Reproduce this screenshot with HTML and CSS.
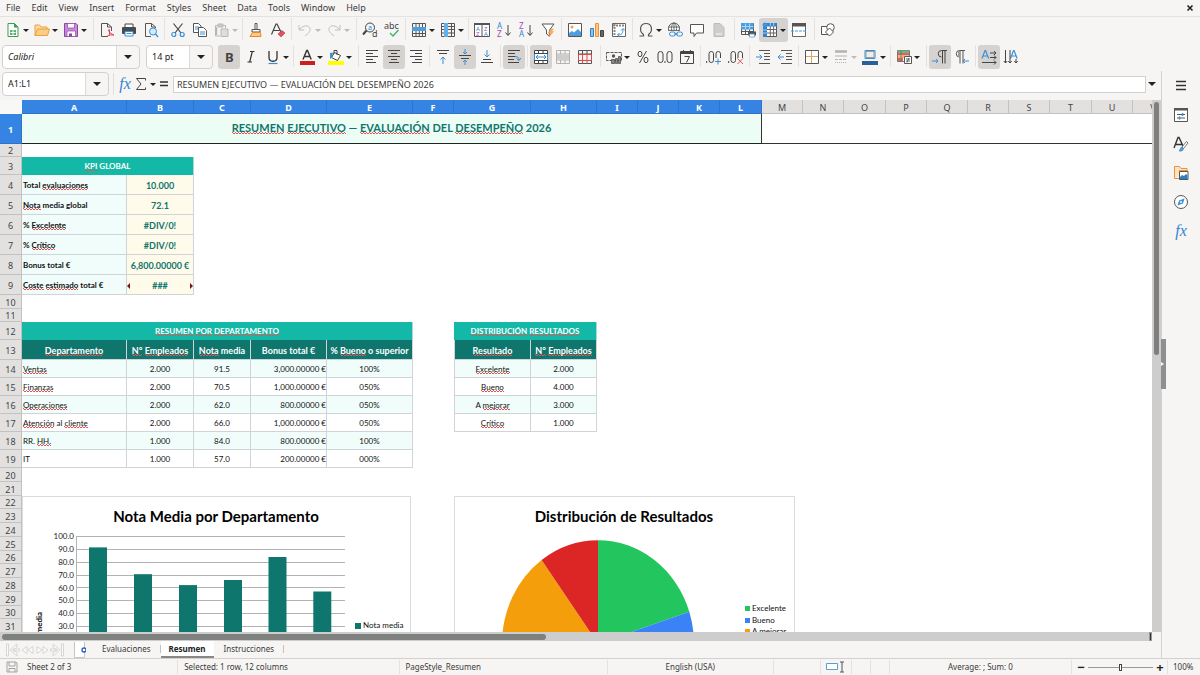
FILE: index.html
```html
<!DOCTYPE html>
<html lang="es">
<head>
<meta charset="utf-8">
<title>Resumen</title>
<link rel="stylesheet" href="styles.css">
</head>
<body>
<div class="app">
<nav class="menubar">
<button>File</button><button>Edit</button><button>View</button><button>Insert</button><button>Format</button><button>Styles</button><button>Sheet</button><button>Data</button><button>Tools</button><button>Window</button><button>Help</button>
<button class="close" aria-label="Close"><svg viewBox="0 0 8 8"><path d="M1.500 1.500l5 5M6.500 1.500l-5 5" stroke="#222" stroke-width="1.600"/></svg></button>
</nav>

<div class="toolbar">
<button class="tb drop" aria-label="New"><svg viewBox="0 0 16 16"><path d="M3 1.500h6.500l3.500 3.500v9.500H3z" fill="#fff" stroke="#3a9d54"/><path d="M9 1v4.500h4z" fill="#3a9d54"/><path d="M5 8h6v5H5z" fill="#59b36f"/><path d="M5.500 10.500h5M8 8v5" stroke="#fff"/></svg></button>
<button class="tb drop" aria-label="Open"><svg viewBox="0 0 16 16"><path d="M1 13.500V3h4.500l1.500 2h6v2.500" fill="#fcdca0" stroke="#e8a33d"/><path d="M1 13.500l2.500-6.500h12l-2 6.500z" fill="#fccb86" stroke="#e8a33d"/></svg></button>
<button class="tb drop" aria-label="Save"><svg viewBox="0 0 16 16"><path d="M1.500 1.500h11.500l1.500 1.500v11.500H1.500z" fill="#c98ad8" stroke="#8f43a8"/><path d="M4.500 1.500h7v4.500h-7zM4 9h8.500v5.500H4z" fill="#fff" stroke="#8f43a8" stroke-width=".7"/><path d="M6 11.500h3v3H6z" fill="#8f43a8"/></svg></button>
<span class="sep wide"></span>
<button class="tb" aria-label="Export as PDF"><svg viewBox="0 0 16 16"><path d="M12.500 9V5l-4-3.500h-6v13H9" fill="none" stroke="#555"/><path d="M8.500 1.500V5h4" fill="none" stroke="#555"/><path d="M9.500 8c1 3 2.500 4 5.500 5M9.500 14c1.500-2 1.500-4 .5-7M8 14.500c2-1.500 4-2 7-1.500" fill="none" stroke="#e03c4b"/></svg></button>
<button class="tb" aria-label="Print"><svg viewBox="0 0 16 16"><path d="M4 5V2h8v3" fill="#fff" stroke="#444"/><rect x="1" y="5" width="14" height="7" rx="1" fill="#4a4a4a"/><path d="M4 9.500h8V14H4z" fill="#fff" stroke="#3a8fd6"/><path d="M5.500 11.500h5" stroke="#3a8fd6"/></svg></button>
<button class="tb" aria-label="Print preview"><svg viewBox="0 0 16 16"><path d="M12.500 6V5l-4-3.500h-6v13H8" fill="none" stroke="#555"/><path d="M8.500 1.500V5h4" fill="none" stroke="#555"/><circle cx="10" cy="9.500" r="3.500" fill="#d6ebfa" stroke="#3a8fd6"/><path d="M12.500 12l2.500 3" stroke="#3a8fd6" stroke-width="1.300"/></svg></button>
<span class="sep"></span>
<button class="tb" aria-label="Cut"><svg viewBox="0 0 16 16" fill="none"><path d="M3.500 1.500l7.500 9.500M12.500 1.500L5 11" stroke="#444" stroke-width="1.200"/><circle cx="3.800" cy="12.500" r="2" stroke="#3a8fd6" stroke-width="1.200"/><circle cx="12.200" cy="12.500" r="2" stroke="#3a8fd6" stroke-width="1.200"/></svg></button>
<button class="tb" aria-label="Copy"><svg viewBox="0 0 16 16" fill="#fff" stroke="#555"><path d="M1.500 1.500h5l2.500 2.500v6.500H1.500z"/><path d="M3 5h4M3 7h4" stroke="#3a8fd6"/><path d="M6.500 5.500h5L14.500 8.500v6H6.500z"/><path d="M8 10h5M8 12h5" stroke="#3a8fd6"/></svg></button>
<button class="tb drop off" aria-label="Paste"><svg viewBox="0 0 16 16" fill="none" stroke="#b9b7b5"><path d="M3.500 3.500h-2v10.500H6M9.500 3.500h2V6" /><path d="M4 2h5v3H4z" fill="#ccc"/><path d="M7 7h7v7.500H7z" fill="#ddd"/><path d="M2.500 5v8" stroke-width="1.500"/></svg></button>
<span class="sep"></span>
<button class="tb" aria-label="Clone formatting"><svg viewBox="0 0 16 16" fill="none" stroke="#555"><path d="M7 1.500h2v6H7zM4 7.500h8v2.500H4z" fill="#fff"/><path d="M4.500 10.500L2 14.500h11l-.5-4z" fill="#fbc98a" stroke="#e08a2c"/></svg></button>
<button class="tb" aria-label="Clear formatting"><svg viewBox="0 0 16 16" fill="none"><path d="M1.500 12.500L6 2h1l4.500 9M3.500 8.500h6" stroke="#444" stroke-width="1.200"/><path d="M8 12l4-3.500 3 2.500-4 4z" fill="#e0525c" stroke="#c43a46" stroke-width=".6"/></svg></button>
<span class="sep"></span>
<button class="tb drop off" aria-label="Undo"><svg viewBox="0 0 16 16" fill="none" stroke="#c2c0be"><path d="M2 3v5h5M2.500 7.500C6 3 12 2.500 13 6.500c.7 3-2 5-5 7.500"/></svg></button>
<button class="tb drop off" aria-label="Redo"><svg viewBox="0 0 16 16" fill="none" stroke="#c2c0be"><path d="M14 3v5H9M13.500 7.500C10 3 4 2.500 3 6.500c-.7 3 2 5 5 7.500"/></svg></button>
<span class="sep wide"></span>
<button class="tb" aria-label="Find and replace"><svg viewBox="0 0 16 16"><circle cx="8" cy="5.500" r="4.500" fill="#eef6fc" stroke="#444"/><path d="M4.500 8.500L1 12.500" stroke="#444" stroke-width="2"/><text x="6" y="8" class="g blue" font-size="7">a</text><text x="10" y="15" class="g" font-size="9">d</text></svg></button>
<button class="tb" aria-label="Spelling"><svg viewBox="0 0 16 16"><text x="0" y="7" class="g" font-size="9">abc</text><path d="M6 11l3 3 5.500-6" fill="none" stroke="#45b36b" stroke-width="1.400"/></svg></button>
<span class="sep"></span>
<button class="tb drop" aria-label="Row"><svg viewBox="0 0 16 16" fill="none"><path d="M1.500 1.500h13v13h-13zM1.500 11.500h13M5 1.500v13M8.300 1.500v13M11.500 1.500v13" stroke="#555"/><path d="M1 5h14v4H1z" fill="#4f9fe0"/></svg></button>
<button class="tb drop" aria-label="Column"><svg viewBox="0 0 16 16" fill="none"><path d="M1.500 1.500h13v13h-13zM1.500 4.500h13M1.500 7.500h13M1.500 11h13M11.500 1.500v13" stroke="#555"/><path d="M4 1h4v14H4z" fill="#63b0ea"/></svg></button>
<span class="sep"></span>
<button class="tb" aria-label="Sort"><svg viewBox="0 0 16 16"><path d="M.5 1.500h15v13H.5zM8 1.500v13" fill="#fff" stroke="#555"/><path d="M0 1h16v2H0z" fill="#555"/><text x="2" y="8.500" class="g blue" font-size="6">A</text><text x="2" y="14" class="g pur" font-size="6">Z</text><text x="10" y="8.500" class="g pur" font-size="6">Z</text><text x="10" y="14" class="g blue" font-size="6">A</text></svg></button>
<button class="tb" aria-label="Sort ascending"><svg viewBox="0 0 16 16"><text x="1" y="7" class="g blue" font-size="8">A</text><text x="1" y="15" class="g pur" font-size="8">Z</text><path d="M12 3v10M9.500 10.500L12 13.500l2.500-3" fill="none" stroke="#444"/></svg></button>
<button class="tb" aria-label="Sort descending"><svg viewBox="0 0 16 16"><text x="1" y="7" class="g pur" font-size="8">Z</text><text x="1" y="15" class="g blue" font-size="8">A</text><path d="M12 3v10M9.500 10.500L12 13.500l2.500-3" fill="none" stroke="#444"/></svg></button>
<button class="tb" aria-label="AutoFilter"><svg viewBox="0 0 16 16"><path d="M2 2h12L9.500 8v6L6.500 12V8z" fill="#fff" stroke="#555"/><path d="M11 7l-3 4h2l-1 4 4.500-5.500H11L13.500 7z" fill="#f7b15c" stroke="#e8943a" stroke-width=".5"/></svg></button>
<span class="sep"></span>
<button class="tb" aria-label="Insert image"><svg viewBox="0 0 16 16"><path d="M1.500 1.500h13v13h-13z" fill="#fff" stroke="#555"/><circle cx="5" cy="5" r="1.500" fill="#f3a24a"/><path d="M2 14v-3l3-2 2 1.500 4-3.500 3 3v4z" fill="#4f9fe0"/></svg></button>
<button class="tb" aria-label="Insert chart"><svg viewBox="0 0 16 16"><path d="M1.500 6.500h3v8h-3z" fill="#8cc4f0" stroke="#2f7fc4"/><path d="M6.500 1.500h3v13h-3z" fill="#fbc98a" stroke="#e8943a"/><path d="M11.500 8.500h3v6h-3z" fill="#666" stroke="#444"/></svg></button>
<button class="tb" aria-label="Insert pivot table"><svg viewBox="0 0 16 16" fill="none"><path d="M1.500 1.500h13v13h-13z" fill="#fff" stroke="#666"/><path d="M2 3.500h12M3.500 2v12" stroke="#888" stroke-width="2" stroke-dasharray="2 1"/><path d="M7 13c4 0 5-2 5-6M10 8.500l2-2 2 2M8.500 11L6.500 13l2 1.500" stroke="#3a8fd6"/></svg></button>
<span class="sep"></span>
<button class="tb drop" aria-label="Special character"><svg viewBox="0 0 16 16"><path d="M1.500 14h4v-1.500C1 9.500 1.500 1.500 8 1.500s7 8 2.500 11V14h4" fill="none" stroke="#555" stroke-width="1.200"/></svg></button>
<button class="tb" aria-label="Hyperlink"><svg viewBox="0 0 16 16" fill="none"><circle cx="7" cy="6.500" r="5.500" stroke="#555"/><ellipse cx="7" cy="6.500" rx="2.500" ry="5.500" stroke="#555" stroke-width=".8"/><path d="M1.500 5h11M1.500 8.500h11M7 1v11" stroke="#555" stroke-width=".8"/><path d="M2 9h14v6H2z" fill="#f6f5f4"/><rect x="2.500" y="10" width="6" height="4" rx="2" stroke="#3a8fd6"/><rect x="9.500" y="10" width="6" height="4" rx="2" stroke="#3a8fd6"/><path d="M7 12h4" stroke="#3a8fd6"/></svg></button>
<button class="tb" aria-label="Comment"><svg viewBox="0 0 16 16"><path d="M1.500 2.500h13v8.500H7.500L5 14.500V11H1.500z" fill="#fff" stroke="#555"/></svg></button>
<button class="tb off" aria-label="Headers and footers"><svg viewBox="0 0 16 16"><path d="M3 1.500h6l4 4v9H3z" fill="#cfcdcb" stroke="#bdbbb9"/><path d="M5 11h6v2H5z" fill="#e5e3e1"/></svg></button>
<span class="sep wide"></span>
<button class="tb" aria-label="Define print area"><svg viewBox="0 0 16 16" fill="none"><path d="M1.500 1.500h12v11h-12zM1.500 9.500h12M5.500 1.500v11M9.500 1.500v11" stroke="#555"/><path d="M1 1h12.500v6.500H1z" fill="#4f9fe0"/><path d="M1.500 4.500h12M5.500 1.500v6M9.500 1.500v6" stroke="#bfe0f8" stroke-width=".8"/><rect x="8" y="9.500" width="8" height="4" fill="#555"/><path d="M9.500 12h5v3h-5z" fill="#fff" stroke="#3a8fd6" stroke-width=".7"/></svg></button>
<button class="tb drop on" aria-label="Freeze rows and columns"><svg viewBox="0 0 16 16" fill="none"><path d="M1.500 1.500h13v13H1.500z" fill="#fff" stroke="#555"/><path d="M5 7.500h10M5 11h10M8.300 4v10.500M11.600 4v10.500" stroke="#666"/><path d="M1 1h14v3.500H5V15H1z" fill="#2f82cf"/><path d="M1 8h4M1 11h4M8.300 1v3M11.600 1v3" stroke="#bfe0f8" stroke-width=".8"/><path d="M3 0v6M0 3h6M1 1l4 4M5 1L1 5" stroke="#4f9fe0" stroke-width=".7"/></svg></button>
<button class="tb" aria-label="Split window"><svg viewBox="0 0 16 16" fill="none"><path d="M1.500 2.500h13v12h-13z" fill="#fff" stroke="#666"/><path d="M1 1h14v3.500H1z" fill="#555"/><path d="M0 9h16" stroke="#3a9be0" stroke-dasharray="3 1"/></svg></button>
<span class="sep wide"></span>
<button class="tb" aria-label="Show draw functions"><svg viewBox="0 0 16 16" fill="#fff" stroke="#555"><path d="M1.500 4.500h8v8h-8z"/><circle cx="10.500" cy="5.500" r="3.800"/><path d="M9.500 6l4 4-4 4-4-4z"/></svg></button>
</div>

<div class="toolbar">
<label class="combo font"><select aria-label="Font name"><option>Calibri</option></select></label>
<label class="combo size"><select aria-label="Font size"><option>14 pt</option></select></label>
<button class="tb on" aria-label="Bold"><svg viewBox="0 0 16 16"><text x="4" y="13" class="g" font-size="13" font-weight="700">B</text></svg></button>
<button class="tb" aria-label="Italic"><svg viewBox="0 0 16 16"><path d="M7 2.500h4.500M4.500 13h4.500M9.300 2.500L6.700 13" fill="none" stroke="#333" stroke-width="1.200"/></svg></button>
<button class="tb drop" aria-label="Underline"><svg viewBox="0 0 16 16" fill="none"><path d="M4 2v6.500c0 5 8 5 8 0V2" stroke="#333" stroke-width="1.300"/><path d="M3.500 14.500h9" stroke="#3a8fd6" stroke-width="1.200"/></svg></button>
<span class="sep"></span>
<button class="tb drop" aria-label="Font color"><svg viewBox="0 0 16 16"><path d="M4 10.500L7.700 1.500h.8l3.700 9M5.200 7.500h5.800" fill="none" stroke="#333" stroke-width="1.400"/><path d="M1 12h15v4H1z" fill="#c9211e"/></svg></button>
<button class="tb drop" aria-label="Highlighting"><svg viewBox="0 0 16 16"><path d="M6.500 3.500l6 3-3 5-6-3z" fill="#fff" stroke="#444"/><path d="M6 5V1.500h3V6" fill="none" stroke="#444"/><path d="M2 10V4l3-.5-1 5z" fill="#3a8fd6"/><path d="M0 12h16v4H0z" fill="#ff0"/></svg></button>
<span class="sep wide"></span>
<button class="tb" aria-label="Align left"><svg viewBox="0 0 16 16"><path d="M2 1.500h12M2 4.500h7M2 7.500h12M2 10.500h7M2 13.500h10" stroke="#444"/></svg></button>
<button class="tb on" aria-label="Center"><svg viewBox="0 0 16 16"><path d="M2 1.500h12M5 4.500h6M2 7.500h12M5 10.500h6M3 13.500h10" stroke="#444"/></svg></button>
<button class="tb" aria-label="Align right"><svg viewBox="0 0 16 16"><path d="M2 1.500h12M7 4.500h7M2 7.500h12M7 10.500h7M4 13.500h10" stroke="#444"/></svg></button>
<span class="sep"></span>
<button class="tb" aria-label="Align top"><svg viewBox="0 0 16 16" fill="none"><path d="M2 1.500h12M4 4.500h8" stroke="#444"/><path d="M8 15V8M5.500 10.500L8 8l2.500 2.500" stroke="#3a8fd6"/></svg></button>
<button class="tb on" aria-label="Center vertically"><svg viewBox="0 0 16 16" fill="none"><path d="M2 6.500h12M4 9.500h8" stroke="#444"/><path d="M8 0v5M6 3l2 2 2-2M8 16v-5M6 13l2-2 2 2" stroke="#3a8fd6"/></svg></button>
<button class="tb" aria-label="Align bottom"><svg viewBox="0 0 16 16" fill="none"><path d="M4 10.500h8M2 13.500h12" stroke="#444"/><path d="M8 1v7M5.500 5.500L8 8l2.500-2.500" stroke="#3a8fd6"/></svg></button>
<span class="sep"></span>
<button class="tb on" aria-label="Wrap text"><svg viewBox="0 0 16 16" fill="none"><path d="M2 1.500h12M2 4.500h7M2 7.500h7M2 10.500h6M2 13.500h11" stroke="#444"/><path d="M9 7.500c3 0 4 1 4 4M10.500 9.500l2.500 2 2-2.500" stroke="#3a8fd6"/></svg></button>
<span class="sep"></span>
<button class="tb on" aria-label="Merge and center"><svg viewBox="0 0 16 16" fill="none"><path d="M1.500 1.500h13v13h-13zM1.500 4.500h13M1.500 11.500h13M5.500 1.500v3M10 1.500v3M5.500 11.500v3M10 11.500v3" fill="#fff" stroke="#444"/><path d="M3 8h10M5 6L3 8l2 2M11 6l2 2-2 2M1.500 5v6M14.500 5v6" stroke="#3a8fd6"/></svg></button>
<button class="tb off" aria-label="Merge cells"><svg viewBox="0 0 16 16" fill="none"><path d="M1.500 1.500h13v13h-13zM1.500 5h13M1.500 11h13M5.500 1.500v3.500M10 1.500v3.500M5.500 11v3.500M10 11v3.500" stroke="#b5b3b1"/><path d="M2 5.500h12v5H2z" fill="#cfcdcb"/></svg></button>
<button class="tb" aria-label="Unmerge cells"><svg viewBox="0 0 16 16" fill="none"><path d="M1.500 1.500h13v13h-13zM1.500 5h13M5.500 1.500v3.500M10 1.500v3.500" stroke="#555"/><path d="M1.500 5.500h13v6h-13zM5.500 5.500v9M10 5.500v9" stroke="#dc4b4b"/></svg></button>
<span class="sep wide"></span>
<button class="tb drop" aria-label="Currency"><svg viewBox="0 0 16 16" fill="none"><path d="M.5 3.500h15v8H.5z" stroke="#555" stroke-dasharray="3 1"/><circle cx="7.500" cy="7" r="1.700" fill="#555"/><path d="M5.500 10.500h3v4h-3zM9.500 9.500h2v5h-2zM12.500 7.500h2v7h-2z" fill="#888" stroke="#444" stroke-width=".7"/></svg></button>
<button class="tb" aria-label="Percent"><svg viewBox="0 0 16 16" fill="none" stroke="#444"><ellipse cx="5" cy="5" rx="2" ry="2.700"/><ellipse cx="11" cy="11" rx="2" ry="2.700"/><path d="M11.500 2L4.500 14"/></svg></button>
<button class="tb" aria-label="Number"><svg viewBox="0 0 16 16" fill="none" stroke="#444"><rect x="1" y="2.500" width="5" height="11" rx="2.500"/><rect x="10" y="2.500" width="5" height="11" rx="2.500"/><path d="M8 12v2"/></svg></button>
<button class="tb" aria-label="Date"><svg viewBox="0 0 16 16" fill="none" stroke="#444"><path d="M1.500 2.500h13v12h-13z"/><path d="M1.500 4h13" stroke-width="2"/><path d="M4.500 1v2M11.500 1v2M5.500 7.500h5l-3 6"/></svg></button>
<span class="sep"></span>
<button class="tb" aria-label="Add decimal place"><svg viewBox="0 0 16 16" fill="none" stroke="#444"><path d="M.7 12v2"/><rect x="3" y="2.500" width="4.500" height="11" rx="2.200"/><rect x="10" y="2.500" width="4.500" height="11" rx="2.200"/><path d="M8.500 9h7v7h-7z" fill="#f6f5f4" stroke="none"/><path d="M12 9.500v6M9 12.500h6" stroke="#3a8fd6"/></svg></button>
<button class="tb" aria-label="Delete decimal place"><svg viewBox="0 0 16 16" fill="none" stroke="#444"><path d="M.7 12v2"/><rect x="3" y="2.500" width="4.500" height="11" rx="2.200"/><rect x="10" y="2.500" width="4.500" height="11" rx="2.200"/><path d="M8.500 9h7v7h-7z" fill="#f6f5f4" stroke="none"/><path d="M9.500 9.500l5.500 5.500M15 9.500L9.500 15" stroke="#e05555"/></svg></button>
<span class="sep"></span>
<button class="tb" aria-label="Increase indent"><svg viewBox="0 0 16 16" fill="none"><path d="M4 1.500h11M9 4.500h6M9 7.500h6M9 10.500h6M4 14.500h11" stroke="#555"/><path d="M1 8h6M4.500 5.500L7 8l-2.500 2.500" stroke="#3a8fd6"/></svg></button>
<button class="tb" aria-label="Decrease indent"><svg viewBox="0 0 16 16" fill="none"><path d="M4 1.500h11M9 4.500h6M9 7.500h6M9 10.500h6M4 14.500h11" stroke="#555"/><path d="M1 8h6M3.500 5.500L1 8l2.500 2.500" stroke="#3a8fd6"/></svg></button>
<span class="sep"></span>
<button class="tb drop" aria-label="Borders"><svg viewBox="0 0 16 16" fill="none"><path d="M1.500 1.500h13v13h-13z" fill="#fff" stroke="#555"/><path d="M7.500 2v12M2 7.500h12" stroke="#e8a35a"/></svg></button>
<button class="tb drop off" aria-label="Border style"><svg viewBox="0 0 16 16" fill="none" stroke="#b5b3b1"><path d="M2 2.500h12" stroke-width="2.500"/><path d="M2 7h12"/><path d="M2 10.500h12" stroke-dasharray="3 1"/><path d="M2 13.500h12" stroke-dasharray="1 1"/></svg></button>
<button class="tb drop" aria-label="Border color"><svg viewBox="0 0 16 16"><path d="M3 1.500h10v8H3z" fill="#fff" stroke="#3a8fd6"/><path d="M4 2.500h8v6H4z" fill="#eee" stroke="#777" stroke-width=".7"/><path d="M0 12h16v4H0z" fill="#2a6099"/></svg></button>
<span class="sep"></span>
<button class="tb drop" aria-label="Conditional formatting"><svg viewBox="0 0 16 16" fill="none"><path d="M1.500 1.500h12v11h-12z" fill="#fff" stroke="#777"/><path d="M2 4h11v2.500H2z" fill="#e0605c"/><path d="M2 1.500h11V4H2z" fill="#66bb7a"/><path d="M2 7h6v2H2z" fill="#f7b15c"/><path d="M2 9h5v3H2z" fill="#e0605c"/><path d="M5 1.500v11" stroke="#777"/><path d="M8.500 7.500h7v7h-7z" fill="#fff" stroke="#555"/><path d="M10 10h4M10 12h4M13 9l-2 4.500" stroke="#444" stroke-width=".8"/></svg></button>
<span class="sep wide"></span>
<button class="tb on" aria-label="Left-to-right"><svg viewBox="0 0 16 16" fill="none" stroke="#444"><path d="M15 1.500H9.500a3 3 0 000 6.500M10.500 1.500V14.500M13 1.500v13"/><path d="M0 12h6M4 10l2 2-2 2" stroke="#3a8fd6"/></svg></button>
<button class="tb" aria-label="Right-to-left"><svg viewBox="0 0 16 16" fill="none" stroke="#555"><path d="M11 1.500H5.500a3 3 0 000 6.500M6 1.500V14.500M9 1.500v13"/><path d="M5 2v6" stroke-width="2" stroke="#999"/><path d="M15 12H9M11 10l-2 2 2 2" stroke="#3a8fd6"/></svg></button>
<span class="sep"></span>
<button class="tb on" aria-label="Text direction from left to right"><svg viewBox="0 0 16 16" fill="none"><path d="M1 9.500L4 1.500h.6l3 8M2 7h4.500" stroke="#3a8fd6" stroke-width="1.200"/><path d="M9 4h6M9 8.500h6M1 13.500h14M13 2l2 2-2 2M13 6.500l2 2-2 2M13 11.500l2 2-2 2" stroke="#444"/></svg></button>
<button class="tb" aria-label="Text direction from top to bottom"><svg viewBox="0 0 16 16" fill="none"><path d="M7.500 9.500l3-8h.6l3 8M9 7h4.500" stroke="#3a8fd6" stroke-width="1.200"/><path d="M2.500 1v13M7 1v13M13 10v4M.8 12l1.700 2 1.700-2M5.300 12L7 14l1.700-2M11.300 12l1.700 2 1.700-2" stroke="#444"/></svg></button>
</div>

<div class="main">
<main class="work">
<div class="formula">
<label class="combo name"><select aria-label="Name box"><option>A1:L1</option></select></label>
<span class="vline"></span>
<button class="fbtn" aria-label="Function wizard"><span class="fx">fx</span></button>
<button class="fbtn sum drop" aria-label="Select function"><svg viewBox="0 0 16 16"><path d="M12.500 4.500v-2h-9L8 8l-4.500 5.500h9v-2" fill="none" stroke="#444"/></svg></button>
<button class="fbtn" aria-label="Formula"><svg viewBox="0 0 16 16"><path d="M4 6h8M4 9.500h8" stroke="#333" stroke-width="1.500"/></svg></button>
<input type="text" aria-label="Input line" value="RESUMEN EJECUTIVO — EVALUACIÓN DEL DESEMPEÑO 2026">
<button class="expand" aria-label="Expand formula bar"></button>
</div>

<div class="viewport">
<div class="sheet">
<table>
<colgroup><col class="w22"><col class="w105"><col class="w67"><col class="w57"><col class="w76"><col class="w86"><col class="w41"><col class="w77"><col class="w66"><col class="w41"><col class="w41"><col class="w41"><col class="w42"><col class="w41"><col class="w41"><col class="w42"><col class="w41"><col class="w41"><col class="w41"><col class="w41"><col class="w42"><col class="w41"><col></colgroup>
<thead><tr class="h14"><td class="corner"></td><th class="sel">A</th><th class="sel">B</th><th class="sel">C</th><th class="sel">D</th><th class="sel">E</th><th class="sel">F</th><th class="sel">G</th><th class="sel">H</th><th class="sel">I</th><th class="sel">J</th><th class="sel">K</th><th class="sel">L</th><th>M</th><th>N</th><th>O</th><th>P</th><th>Q</th><th>R</th><th>S</th><th>T</th><th>U</th><th>V</th></tr></thead>
<tbody>
<tr class="h30"><th class="sel">1</th><td colspan="12" class="title"><span class="sp">RESUMEN</span> <span class="sp">EJECUTIVO</span> — <span class="sp">EVALUACIÓN</span> DEL <span class="sp">DESEMPEÑO</span> 2026</td><td colspan="10" class="frozen"></td></tr>
<tr class="h13"><th>2</th></tr>
<tr class="h18"><th>3</th><td colspan="2" class="band"><span class="sp">KPI</span> GLOBAL</td></tr>
<tr class="h20"><th>4</th><td class="lab">Total <span class="sp">evaluaciones</span></td><td class="val">10.000</td></tr>
<tr class="h20"><th>5</th><td class="lab"><span class="sp">Nota</span> media global</td><td class="val">72.1</td></tr>
<tr class="h20"><th>6</th><td class="lab">% <span class="sp">Excelente</span></td><td class="val">#DIV/0!</td></tr>
<tr class="h20"><th>7</th><td class="lab">% <span class="sp">Crítico</span></td><td class="val">#DIV/0!</td></tr>
<tr class="h20"><th>8</th><td class="lab">Bonus total €</td><td class="val">6,800.00000 €</td></tr>
<tr class="h20"><th>9</th><td class="lab"><span class="sp">Coste</span> <span class="sp">estimado</span> total €</td><td class="val"><div class="clip"><span class="tri left"></span>###<span class="tri right"></span></div></td></tr>
<tr class="h14"><th>10</th></tr>
<tr class="h13"><th>11</th></tr>
<tr class="h18"><th>12</th><td colspan="5" class="band"><span class="sp">RESUMEN</span> <span class="sp">POR</span> <span class="sp">DEPARTAMENTO</span></td><td></td><td colspan="2" class="band"><span class="sp">DISTRIBUCIÓN</span> <span class="sp">RESULTADOS</span></td></tr>
<tr class="h20"><th>13</th><td class="head"><span class="sp">Departamento</span></td><td class="head"><span class="sp">N°</span> <span class="sp">Empleados</span></td><td class="head"><span class="sp">Nota</span> media</td><td class="head">Bonus total €</td><td class="head">% <span class="sp">Bueno</span> o superior</td><td></td><td class="head first"><span class="sp">Resultado</span></td><td class="head"><span class="sp">N°</span> <span class="sp">Empleados</span></td></tr>
<tr class="h18 tint"><th>14</th><td class="c l"><span class="sp">Ventas</span></td><td class="c">2.000</td><td class="c">91.5</td><td class="c r">3,000.00000 €</td><td class="c">100%</td><td></td><td class="c first"><span class="sp">Excelente</span></td><td class="c">2.000</td></tr>
<tr class="h18"><th>15</th><td class="c l"><span class="sp">Finanzas</span></td><td class="c">2.000</td><td class="c">70.5</td><td class="c r">1,000.00000 €</td><td class="c">050%</td><td></td><td class="c first"><span class="sp">Bueno</span></td><td class="c">4.000</td></tr>
<tr class="h18 tint"><th>16</th><td class="c l"><span class="sp">Operaciones</span></td><td class="c">2.000</td><td class="c">62.0</td><td class="c r">800.00000 €</td><td class="c">050%</td><td></td><td class="c first">A <span class="sp">mejorar</span></td><td class="c">3.000</td></tr>
<tr class="h18"><th>17</th><td class="c l"><span class="sp">Atención</span> al <span class="sp">cliente</span></td><td class="c">2.000</td><td class="c">66.0</td><td class="c r">1,000.00000 €</td><td class="c">050%</td><td></td><td class="c first"><span class="sp">Crítico</span></td><td class="c">1.000</td></tr>
<tr class="h18 tint"><th>18</th><td class="c l">RR. <span class="sp">HH.</span></td><td class="c">1.000</td><td class="c">84.0</td><td class="c r">800.00000 €</td><td class="c">100%</td></tr>
<tr class="h18"><th>19</th><td class="c l">IT</td><td class="c">1.000</td><td class="c">57.0</td><td class="c r">200.00000 €</td><td class="c">000%</td></tr>
<tr class="h14"><th>20</th></tr>
<tr class="h14"><th>21</th></tr>
<tr class="h13"><th>22</th></tr>
<tr class="h14"><th>23</th></tr>
<tr class="h14"><th>24</th></tr>
<tr class="h14"><th>25</th></tr>
<tr class="h13"><th>26</th></tr>
<tr class="h14"><th>27</th></tr>
<tr class="h14"><th>28</th></tr>
<tr class="h14"><th>29</th></tr>
<tr class="h13"><th>30</th></tr>
<tr class="h14"><th>31</th></tr>
<tr class="h14"><th>32</th></tr>
</tbody>
</table>

<svg class="chart bars" viewBox="0 0 389 240" width="389" height="240">
<rect x=".5" y=".5" width="388" height="260" fill="#fff" stroke="#dcdcdc"/>
<text x="194" y="26" class="ctitle">Nota Media por Departamento</text>
<path d="M54 40.500h269M54 53.500h269M54 66.500h269M54 79.500h269M54 91.500h269M54 104.500h269M54 117.500h269M54 130.500h269M54.500 40v129" fill="none" stroke="#b3b3b3"/>
<g fill="#0f766e"><rect x="67" y="51.400" width="18" height="117"/><rect x="112" y="78.200" width="18" height="90"/><rect x="157" y="89.100" width="18" height="80"/><rect x="202" y="84" width="18" height="85"/><rect x="246.500" y="61" width="18" height="107"/><rect x="291.300" y="95.500" width="18" height="73"/></g>
<g class="tick"><text x="52" y="43">100.0</text><text x="52" y="56">90.0</text><text x="52" y="69">80.0</text><text x="52" y="82">70.0</text><text x="52" y="95">60.0</text><text x="52" y="107">50.0</text><text x="52" y="120">40.0</text><text x="52" y="133">30.0</text></g>
<text class="axis" transform="translate(20 157) rotate(-90)">Nota media</text>
<rect x="333" y="127" width="6" height="6" fill="#0f766e"/><text x="341" y="132" class="leg">Nota media</text>
</svg>

<svg class="chart pie" viewBox="0 0 341 240" width="341" height="240">
<rect x=".5" y=".5" width="340" height="260" fill="#fff" stroke="#dcdcdc"/>
<text x="170" y="26" class="ctitle">Distribución de Resultados</text>
<path d="M144 147.700V44.300A96 103.400 0 01235.300 115.700z" fill="#22c55e"/>
<path d="M144 147.700L235.300 115.700A96 103.400 0 0187.600 231.300z" fill="#3b82f6"/>
<path d="M144 147.700L87.600 231.300A96 103.400 0 0187.600 64z" fill="#f59e0b"/>
<path d="M144 147.700L87.600 64A96 103.400 0 01144 44.300z" fill="#dc2626"/>
<rect x="291" y="110" width="5" height="5" fill="#22c55e"/><text x="298" y="115" class="leg">Excelente</text>
<rect x="291" y="122" width="5" height="5" fill="#3b82f6"/><text x="298" y="127" class="leg">Bueno</text>
<rect x="291" y="133" width="5" height="5" fill="#f59e0b"/><text x="298" y="138" class="leg">A mejorar</text>
</svg>
</div>
<div class="vscroll"><div class="thumb"></div></div>
<div class="hscroll"><div class="thumb"></div><div class="splitter"></div></div>
</div>

<div class="tabs">
<div class="tabnav">
<button aria-label="First sheet"><svg viewBox="0 0 15 16"><path d="M1.500 2v12h2V2zM12 2L5 8l7 6v-3L8.500 8 12 5zM8 7h7v2H8z"/></svg></button>
<button aria-label="Previous sheet"><svg viewBox="0 0 15 16"><path d="M7 4.500L2 8l5 3.500zM13 4.500L8 8l5 3.500z"/></svg></button>
<button aria-label="Next sheet"><svg viewBox="0 0 15 16"><path d="M2 4.500L7 8l-5 3.500zM8 4.500L13 8l-5 3.500z"/></svg></button>
<button aria-label="Last sheet"><svg viewBox="0 0 15 16"><path d="M11.500 2v12h2V2zM3 2l7 6-7 6v-3L6.500 8 3 5zM7 7H0v2h7z"/></svg></button>
</div>
<button class="add" aria-label="Add sheet"><svg viewBox="0 0 12 16"><path d="M.5 0v15.500h10V0" fill="#fff" stroke="#c8c6c4"/><circle cx="10" cy="8" r="2" fill="#fff" stroke="#2a5fb0" stroke-width="1.300"/></svg></button>
<button class="tab">Evaluaciones</button><button class="tab active">Resumen</button><button class="tab">Instrucciones</button>
</div>
</main>

<aside class="sidebar">
<button aria-label="Sidebar settings"><svg viewBox="0 0 16 16"><path d="M3 3.500h10M3 7.500h10M3 11.500h10" stroke="#333" stroke-width="1.400"/></svg></button>
<button aria-label="Properties"><svg viewBox="0 0 16 16" fill="none"><path d="M1.500 1.500h13v13h-13z" fill="#fff" stroke="#555"/><path d="M1 1h14v2.500H1z" fill="#555"/><path d="M4 7.500h8M4 11h8" stroke="#555"/><path d="M9.500 6v3M6.500 9.500v3" stroke="#3a8fd6" stroke-width="1.500"/></svg></button>
<button aria-label="Styles"><svg viewBox="0 0 16 16" fill="none"><path d="M1 12L5 1.500h1L10 10M2.500 8.500H9" stroke="#333" stroke-width="1.400"/><path d="M9 11l4.500-5.500 1.500 1.500-4.500 5.500z" fill="#fff" stroke="#555" stroke-width=".8"/><path d="M6 15c1.500-1 1-3.500 3-4l1.500 1.500c0 2-2 3-4.500 2.500z" fill="#4f9fe0" stroke="#2f7fc4" stroke-width=".6"/></svg></button>
<button aria-label="Gallery"><svg viewBox="0 0 16 16"><path d="M1.500 13.500v-12h5l1.500 2h6v3" fill="#fde3bf" stroke="#e8943a"/><path d="M1.500 13.500h5v-8h8" fill="none" stroke="#e8943a"/><path d="M6.500 6.500h8.500v8H6.500z" fill="#fff" stroke="#555"/><path d="M7 14v-2l2-2 2 1 2-2 1.500 1.500V14z" fill="#2f7fc4"/></svg></button>
<button aria-label="Navigator"><svg viewBox="0 0 16 16"><circle cx="8" cy="8" r="6.500" fill="#fff" stroke="#555"/><path d="M11.500 4.500L10 9.500l-5.500 2L6 6.500z" fill="#3a8fd6"/><circle cx="8" cy="8" r="1" fill="#fff"/></svg></button>
<button aria-label="Functions"><span class="fx">fx</span></button>
<button class="grip" aria-label="Hide sidebar"><span class="tri right"></span></button>
</aside>
</div>

<footer class="status">
<div class="s1"><svg viewBox="0 0 12 12"><path d="M1 1h9l1 1v9H1zM3 1v4h6V1M3 11V7.500h6V11" fill="none" stroke="#a5a3a1"/></svg><span>Sheet 2 of 3</span></div>
<div class="s2">Selected: 1 row, 12 columns</div>
<div class="s3">PageStyle_Resumen</div>
<div class="s4">English (USA)</div>
<div class="s5"></div>
<div class="s6"><svg viewBox="0 0 24 14"><path d="M1.500 3.500h11v6h-11z" fill="#fff" stroke="#5aa0cf"/><path d="M15 2h4M15 12h4M17 2v10" stroke="#555"/></svg></div>
<div class="s7"></div>
<div class="s7"></div>
<div class="s8">Average: ; Sum: 0</div>
<div class="s9"><button aria-label="Zoom out">−</button><input type="range" aria-label="Zoom" min="0" max="100" value="50"><button aria-label="Zoom in">+</button></div>
<div class="s10">100%</div>
</footer>
</div>
</body>
</html>
```
FILE: styles.css
```css
* { box-sizing: border-box; }
body {
  margin: 0;
  background: #f6f5f4;
  color: #3a3a3a;
  font: 9px/12px "Noto Sans", sans-serif;
}
button, input, select {
  margin: 0;
  padding: 0;
  border: 0;
  background: none;
  color: inherit;
  font: inherit;
}
.app { display: flex; flex-direction: column; height: 100vh; overflow: hidden; }

/* Menu bar */
.menubar {
  display: flex;
  align-items: center;
  gap: 11px;
  height: 17px;
  padding: 0 6px;
  border-bottom: 1px solid #e4e2e0;
}
.menubar .close { margin-left: auto; }
.close svg { display: block; width: 8px; height: 8px; }

/* Toolbars */
.toolbar { display: flex; align-items: flex-start; height: 27px; padding: 1px 0 0 2px; }
.tb {
  position: relative;
  flex: none;
  width: 22px;
  height: 24px;
  padding: 0 3px;
  border-radius: 3px;
}
.tb svg { display: block; width: 16px; height: 16px; overflow: visible; }
.tb.drop { width: 29px; }
.tb.on { background: #d5d2cf; }
.drop::after, .expand::after, .combo::after {
  content: "";
  position: absolute;
  top: 11px;
  right: 2px;
  border: 3px solid transparent;
  border-top: 3px solid #222;
  border-bottom: 0;
}
.drop.off::after { border-top-color: #bbb; }
.sep { flex: none; width: 5px; height: 22px; border-left: 1px solid #e4e2e0; margin-left: 2px; margin-right: -2px; }
.sep.wide { width: 7px; margin-left: 4px; margin-right: -4px; }
.g { font-family: "Noto Sans", sans-serif; fill: #444; }
.g.blue { fill: #2f86d0; }
.g.pur { fill: #a347ba; }

.combo {
  position: relative;
  flex: none;
  height: 24px;
  border: 1px solid #d3d0cd;
  border-radius: 4px;
  background: linear-gradient(#f6f5f4, #f6f5f4) right / 22px 100% no-repeat #fff;
  overflow: hidden;
}
.combo select {
  appearance: none;
  display: block;
  width: 100%;
  height: 100%;
  padding-left: 5px;
  color: #222;
}
.combo::before {
  content: "";
  position: absolute;
  top: 0;
  bottom: 0;
  right: 22px;
  border-left: 1px solid #dcd9d6;
}
.combo::after { top: 9px; right: 7px; border-width: 4px 4px 0; }
.font { width: 138px; margin-right: 6px; font-style: italic; }
.size { width: 67px; margin-right: 5px; }

/* Work area */
.main { display: flex; flex: 1; min-height: 0; }
.work { display: flex; flex-direction: column; flex: 1; min-width: 0; }
.formula { display: flex; align-items: center; flex: none; height: 29px; padding: 0 0 3px 2px; }
.name { width: 107px; }
.vline { width: 1px; height: 22px; margin: 0 3px 0 4px; background: #e0dedc; }
.fbtn { position: relative; width: 16px; height: 20px; }
.fbtn svg { display: block; width: 16px; height: 16px; }
.fbtn.drop { width: 23px; }
.fbtn.drop::after { top: 9px; right: 0; }
.fx { color: #2f86d0; font: italic 16px/16px "Liberation Serif", serif; }
.formula input {
  flex: 1;
  min-width: 0;
  height: 17px;
  margin-left: 1px;
  padding: 0 3px;
  border: 1px solid #d3d0cd;
  background: #fff;
}
.expand { position: relative; width: 15px; height: 24px; }
.expand::after { top: 10px; right: 5px; border-width: 4px 4px 0; }

.viewport {
  display: grid;
  grid-template: minmax(0, 1fr) 9px / minmax(0, 1fr) 9px;
  flex: 1;
  min-height: 0;
}
.sheet { position: relative; overflow: hidden; background: #fff; }
.vscroll { padding: 2px 2px 0; background: #cdcdcd; }
.vscroll .thumb { width: 5px; height: 253px; border-radius: 3px; background: #7f7f7f; }
.hscroll { display: flex; align-items: center; justify-content: space-between; padding-left: 2px; background: #cdcdcd; }
.hscroll .thumb { width: 544px; height: 6px; border-radius: 3px; background: #7f817f; }
.splitter { width: 3px; height: 9px; border: 1px solid #999; background: #333; }

/* Spreadsheet grid */
table {
  table-layout: fixed;
  width: calc(100% + 22px);
  border-collapse: separate;
  border-spacing: 0;
  line-height: 11px;
}
th, td { padding: 1px 0 0; text-align: center; white-space: nowrap; overflow: hidden; }
.w22 { width: 22px; } .w41 { width: 41px; } .w42 { width: 42px; }
.w57 { width: 57px; } .w66 { width: 66px; } .w67 { width: 67px; }
.w76 { width: 76px; } .w77 { width: 77px; } .w86 { width: 86px; } .w105 { width: 105px; }
.h13 { height: 13px; } .h14 { height: 14px; } .h18 { height: 18px; }
.h20 { height: 20px; } .h30 { height: 30px; }
th {
  border: solid #c4c2c0;
  border-width: 0 1px 1px 0;
  background: #e2e1e0;
  color: #444;
  font-weight: 400;
}
th.sel { border-color: #2f74c8; background: #3584e4; color: #fff; font-weight: 700; }
.corner { background: #f8f8f7; }
td { font-family: Lato, sans-serif; color: #111; font-size: 8px; }
.title {
  padding: 0 0 1px;
  border-right: 1px solid #333;
  border-bottom: 1px solid #222;
  background: #ecfdf5;
  color: #0f766e;
  font-size: 11px;
  font-weight: 700;
  line-height: 16px;
}
.frozen { border-bottom: 1px solid #333; }
.band { border-right: 1px solid #a9d8d2; background: #14b8a6; color: #fff; font-weight: 700; }
.lab, .val, .head, .c { padding-top: 2px; border: solid #d0d4d8; border-width: 0 1px 1px 0; }
.lab { background: #f0fdfa; font-weight: 700; text-align: left; }
.lab, .l { padding-left: 1px; }
.val { background: #fffbeb; color: #0f766e; font-size: 9px; font-weight: 700; }
.clip { display: flex; align-items: center; justify-content: space-between; }
.tri { border: 3px solid transparent; }
.tri.left { border-right-color: #7a1515; border-left: 0; }
.tri.right { border-left-color: #7a1515; border-right: 0; }
.head { background: #0f766e; color: #fff; font-size: 9px; font-weight: 700; }
.tint .c { background: #f0fdfa; }
.l { text-align: left; }
.r { text-align: right; }
.first { border-left-width: 1px; }

/* Spelling marks: two dotted rows that read as a fine zigzag */
.sp {
  background:
    linear-gradient(90deg, #e25555 1px, transparent 1px) 0 calc(100% - 1px) / 3px 1px repeat-x,
    linear-gradient(90deg, transparent 1px, #e25555 1px) 0 100% / 3px 1px repeat-x;
}

/* Floating charts */
.chart { position: absolute; top: 396px; font-family: Lato, sans-serif; }
.bars { left: 22px; }
.pie { left: 454px; }
.ctitle { font-size: 15px; font-weight: 700; text-anchor: middle; fill: #000; }
.tick { font-size: 8px; text-anchor: end; fill: #222; }
.axis { font-size: 8px; font-weight: 700; fill: #000; }
.leg { font-size: 8px; fill: #111; }

/* Sheet tabs */
.tabs { display: flex; flex: none; height: 17px; font-size: 8px; }
.tabnav { display: flex; padding: 0 5px; }
.tabnav svg { display: block; width: 15px; height: 16px; fill: #fafafa; stroke: #cfcdcb; stroke-width: .8; }
.add { width: 12px; margin: 0 6px 0 4px; }
.add svg { display: block; width: 12px; height: 16px; }
.tab { position: relative; padding: 0 10px 1px; }
.tab::after { content: ""; position: absolute; top: 4px; bottom: 5px; right: 0; border-right: 1px solid #c4c2c0; }
.tab.active { padding: 0 8px; border-bottom: 2px solid #8a8886; background: #fff; color: #222; font-weight: 700; }
.tab.active::after { display: none; }

/* Sidebar */
.sidebar {
  position: relative;
  display: flex;
  flex-direction: column;
  flex: none;
  width: 39px;
  border-left: 1px solid #d3d0cd;
}
.sidebar button { height: 29px; padding: 0 11px; }
.sidebar svg { display: block; width: 16px; height: 16px; }
.sidebar .grip { position: absolute; top: 268px; left: -1px; width: 5px; height: 50px; padding: 0; background: #8f8f8f; }
.grip .tri { display: block; border-width: 2px 0 2px 3px; border-left-color: #fff; }

/* Status bar */
.status { display: flex; align-items: center; flex: none; height: 17px; border-top: 1px solid #d3d0cd; font-size: 8px; white-space: nowrap; }
.status > div { display: flex; align-items: center; height: 14px; border-left: 1px solid #e4e2e0; }
.status > .s1 { flex: 1 1 177px; gap: 9px; padding-left: 6px; border-left: 0; }
.s1 svg { width: 12px; height: 12px; }
.s2 { flex: 1 1 222px; padding-left: 6px; }
.s3 { flex: 1 1 207px; padding-left: 5px; }
.s4 { flex: 1 1 166px; justify-content: center; }
.s5 { width: 47px; }
.s6 { width: 31px; padding-left: 4px; }
.s6 svg { width: 24px; height: 14px; }
.s7 { width: 19px; }
.s8 { flex: 1 1 182px; justify-content: center; }
.s9 { width: 96px; justify-content: space-between; padding: 0 3px 0 5px; }
.s9 button { width: 8px; color: #222; font-size: 13px; font-weight: 700; }
.s9 input { appearance: none; width: 65px; height: 12px; background: linear-gradient(#999, #999) center / 100% 1px no-repeat; }
.s9 input::-webkit-slider-thumb { appearance: none; width: 3px; height: 7px; border: 1px solid #444; background: #fff; }
.s10 { width: 33px; padding-left: 5px; }
```
